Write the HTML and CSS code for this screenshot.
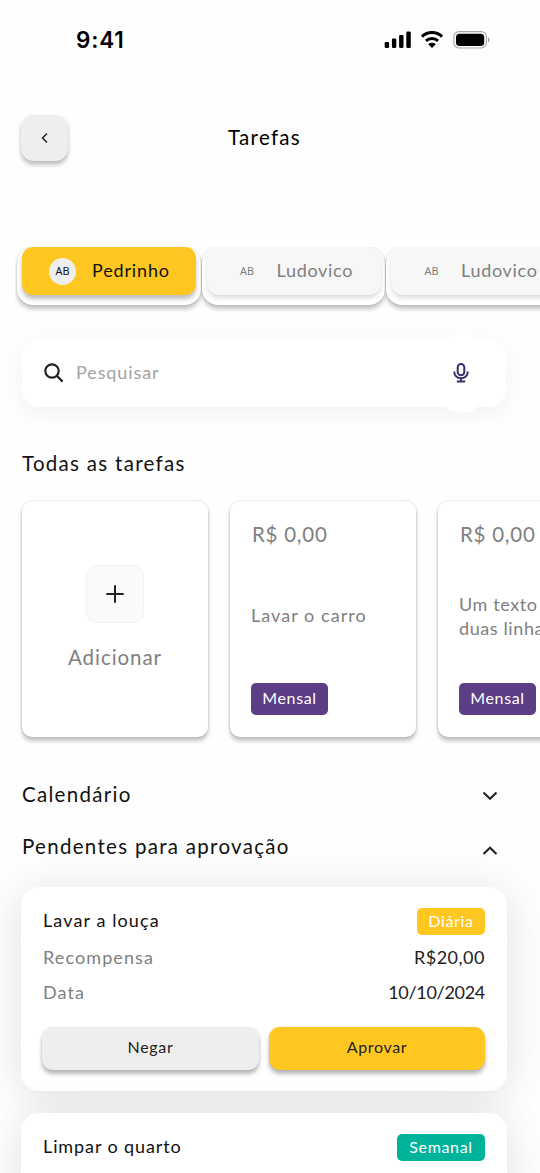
FILE: index.html
```html
<!DOCTYPE html>
<html lang="pt-BR">
<head>
<meta charset="utf-8">
<title>Tarefas</title>
<link rel="stylesheet" href="styles.css">
</head>
<body>
<main class="screen">
  <div class="status">
    <span class="clock">9:41</span>
    <svg class="status-icons" width="106" height="18" viewBox="0 0 106 18">
      <rect x="0.7" y="11" width="4.4" height="6" rx="1.3"/>
      <rect x="7.9" y="7.4" width="4.4" height="9.6" rx="1.3"/>
      <rect x="15.1" y="4" width="4.4" height="13" rx="1.3"/>
      <rect x="22.3" y="0.5" width="4.5" height="16.5" rx="1.3"/>
      <path d="M37.900 5.600a14.800 14.800 0 0 1 20.200 0M41.900 9.900a9 9 0 0 1 12.200 0" fill="none" stroke="#000" stroke-width="3"/>
      <path d="M44.200 13.200a5.600 5.600 0 0 1 7.600 0L48 17z"/>
      <rect x="69.800" y="0.600" width="32.600" height="16.400" rx="5.200" fill="none" stroke="#a5a5a5" stroke-width="1.100"/>
      <rect x="72" y="2.700" width="28.200" height="12.200" rx="3.500"/>
      <path d="M104 6.200c2 .9 2 4.300 0 5.200z" fill="#a5a5a5"/>
    </svg>
  </div>

  <header class="header">
    <button class="back" aria-label="Voltar">
      <svg width="10" height="12" viewBox="0 0 10 12"><path d="M7 1.500 2.500 6 7 10.500"/></svg>
    </button>
    <h1 class="title">Tarefas</h1>
  </header>

  <nav class="chips">
    <div class="chip-frame"><div class="chip chip-active"><span class="avatar">AB</span><span class="name name-active">Pedrinho</span></div></div>
    <div class="chip-frame"><div class="chip"><span class="avatar">AB</span><span class="name">Ludovico</span></div></div>
    <div class="chip-frame"><div class="chip"><span class="avatar">AB</span><span class="name">Ludovico</span></div></div>
  </nav>

  <div class="search">
    <svg class="lens" width="20" height="20" viewBox="0 0 20 20"><circle cx="8" cy="8" r="6.700"/><path d="m13 13 5.600 5.600"/></svg>
    <span class="placeholder">Pesquisar</span>
    <span class="mic">
      <svg width="16" height="20" viewBox="0 0 16 20"><rect x="4.700" y="1" width="6.600" height="11.300" rx="3.300"/><path d="M1.300 8.400v.8a6.700 6 0 0 0 13.400 0v-.8M8 15.300v3.200M3.800 18.500h8.400"/></svg>
    </span>
  </div>

  <h2 class="heading all">Todas as tarefas</h2>
  <section class="tasks">
    <article class="task task-add">
      <span class="plus"><svg width="18" height="18" viewBox="0 0 18 18"><path d="M9 .3v17.400M.3 9h17.400"/></svg></span>
      <span class="add-label">Adicionar</span>
    </article>
    <article class="task">
      <span class="price">R$ 0,00</span>
      <span class="desc">Lavar o carro</span>
      <span class="tag tag-month">Mensal</span>
    </article>
    <article class="task">
      <span class="price">R$ 0,00</span>
      <span class="desc desc-long">Um texto<br>duas linhas</span>
      <span class="tag tag-month">Mensal</span>
    </article>
  </section>

  <div class="fold fold-calendar">
    <h2 class="heading">Calendário</h2>
    <svg width="16" height="10" viewBox="0 0 16 10"><path d="m1.500 1.500 6.500 6.200 6.500-6.200"/></svg>
  </div>
  <div class="fold fold-pending">
    <h2 class="heading">Pendentes para aprovação</h2>
    <svg width="16" height="10" viewBox="0 0 16 10"><path d="m1.500 8 6.500-6.200L14.500 8"/></svg>
  </div>

  <section class="approvals">
    <article class="card">
      <div class="row row-top"><span class="job">Lavar a louça</span><span class="tag tag-day">Diária</span></div>
      <div class="row"><span class="label">Recompensa</span><span class="value">R$20,00</span></div>
      <div class="row"><span class="label">Data</span><span class="value date">10/10/2024</span></div>
      <div class="actions"><button class="btn deny">Negar</button><button class="btn approve">Aprovar</button></div>
    </article>
    <article class="card">
      <div class="row row-top"><span class="job job-room">Limpar o quarto</span><span class="tag tag-week">Semanal</span></div>
    </article>
  </section>
</main>
</body>
</html>
```

FILE: styles.css
```css
* { box-sizing: border-box; }
body { margin: 0; background: #fefefe; font-family: Lato, sans-serif; color: #111; overflow: hidden; }
h1, h2 { margin: 0; font-weight: 400; }
button { border: 0; padding: 0; font: inherit; color: inherit; }
svg { display: block; flex: none; }
span, h1, h2 { white-space: nowrap; }
.screen { width: 540px; height: 1173px; overflow: hidden; display: flex; flex-direction: column; }
.screen > * { flex: none; }

.status { height: 115px; padding: 26px 50px 0 76px; display: flex; justify-content: space-between; align-items: flex-start; color: #000; }
.clock { font: 600 22.5px/27px Inter, sans-serif; letter-spacing: .8px; }
.status-icons { margin-top: 5px; }

.header { height: 132px; padding-left: 21px; display: grid; grid-template-columns: 47px 393px; align-items: start; }
.back { width: 47px; height: 46px; border-radius: 13px; background: #eee; box-shadow: 0 4px 4px rgba(0,0,0,.24), 0 0 3px rgba(0,0,0,.05); display: flex; align-items: center; justify-content: center; }
.back path { fill: none; stroke: #222; stroke-width: 1.5; }
.title { text-align: center; font-size: 20.5px; line-height: 44px; letter-spacing: 1.3px; color: #000; }

.chips { height: 92px; padding-left: 17px; display: flex; gap: 1px; }
.chip-frame { flex: none; width: 183.5px; height: 58px; padding: 0 4.5px 0 5px; border-radius: 16px; background: #fff; box-shadow: 0 4px 4px rgba(0,0,0,.23), 0 0 2px rgba(0,0,0,.18); clip-path: inset(0 -2px -12px -2px); }
.chip { height: 48px; padding-left: 27px; border-radius: 13px; background: #f7f7f7; color: #808080; box-shadow: 0 3px 5px rgba(0,0,0,.14); display: flex; align-items: center; gap: 16px; }
.chip-active { border-radius: 11px; background: #ffc720; color: #111; box-shadow: 0 4px 4px rgba(0,0,0,.25); }
.avatar { width: 27px; height: 27px; border-radius: 50%; font: 10.8px/26px "Noto Sans", sans-serif; text-align: center; }
.chip-active .avatar { background: #eee; }
.name { font-size: 18px; line-height: 44px; letter-spacing: .7px; padding-bottom: 3px; }
.name-active { letter-spacing: .85px; }

.search { margin: 0 34px 0 22px; height: 68px; padding: 0 14px 0 22px; border-radius: 17px; background: #fff; box-shadow: 0 4px 28px rgba(0,0,0,.035), 0 10px 18px rgba(0,0,0,.018); display: flex; align-items: center; }
.lens, .mic svg { fill: none; stroke: #222; stroke-width: 2.2; }
.placeholder { margin-left: 12px; font-size: 18px; line-height: 66px; letter-spacing: .9px; color: #a3a3a3; padding-bottom: 2px; }
.mic { margin-left: auto; height: 80px; width: 62px; border-radius: 50%; background: #fff; display: flex; align-items: center; justify-content: center; }
.mic svg { stroke: #37306b; stroke-width: 2; }

.heading { font-size: 20.5px; line-height: 26px; letter-spacing: 1.3px; }
.all { height: 51px; margin: 43px 0 0 22px; }
.tasks { height: 278px; padding-left: 22px; display: flex; gap: 22px; }
.task { flex: none; width: 186px; height: 236px; padding: 20px 21px 22px; border-radius: 10px; background: #fff; box-shadow: 0 4px 4px rgba(0,0,0,.24), 0 0 2px rgba(0,0,0,.2); display: flex; flex-direction: column; align-items: flex-start; color: #808080; }
.task-add { align-items: center; padding-top: 64px; }
.plus { width: 58px; height: 58px; border: 1px solid #f2f2f2; border-radius: 10px; background: #fafafa; display: flex; align-items: center; justify-content: center; }
.plus path { stroke: #222; stroke-width: 2; }
.add-label { margin-top: 21px; font-size: 20.5px; line-height: 27px; letter-spacing: .95px; }
.price { padding-left: 1px; font-size: 20.5px; line-height: 26px; letter-spacing: .75px; }
.desc { flex: 1; display: flex; flex-direction: column; justify-content: center; font-size: 18px; line-height: 24px; letter-spacing: 1.05px; }
.desc-long { display: block; padding-top: 45px; letter-spacing: .6px; }
.tag { border-radius: 5px; text-align: center; color: #fff; font-size: 16px; line-height: 25px; letter-spacing: .65px; }
.tag-month { width: 77px; height: 32px; line-height: 30px; background: #5b3e85; }

.fold { display: flex; justify-content: space-between; align-items: flex-start; padding: 0 42px 0 22px; height: 52px; }
.fold svg { margin-top: 10px; }
.fold path { fill: none; stroke: #222; stroke-width: 2.1; }
.fold-calendar { margin-top: 2px; }
.fold-pending { height: 54px; }
.fold-pending svg { margin-top: 13px; }

.approvals { padding: 0 33px 0 21px; display: flex; flex-direction: column; gap: 22px; }
.card { height: 204px; padding: 16px 22px 0; border-radius: 18px; background: #fff; box-shadow: 0 5px 44px rgba(0,0,0,.12); }
.row { display: flex; justify-content: space-between; height: 35px; align-items: center; font-size: 18px; line-height: 35px; letter-spacing: .5px; }
.row-top { height: 37px; }
.job { line-height: 33px; padding-bottom: 2px; letter-spacing: 1.1px; }
.job-room { letter-spacing: .9px; }
.label { color: #808080; letter-spacing: 1.1px; }
.value { color: #222; }
.date { letter-spacing: -.3px; }
.tag-day { width: 68px; height: 27px; background: #ffc720; }
.tag-week { width: 88px; height: 27px; background: #00b49c; }
.actions { margin: 17px 0 0 -1px; display: grid; grid-template-columns: 217px 216px; gap: 10px; }
.btn { height: 43px; border-radius: 11px; font-size: 16px; line-height: 40px; letter-spacing: .65px; padding-bottom: 3px; color: #222; background: #eee; box-shadow: 0 4px 4px rgba(0,0,0,.28), 0 0 2px rgba(0,0,0,.08); }
.approve { background: #ffc720; }
```
